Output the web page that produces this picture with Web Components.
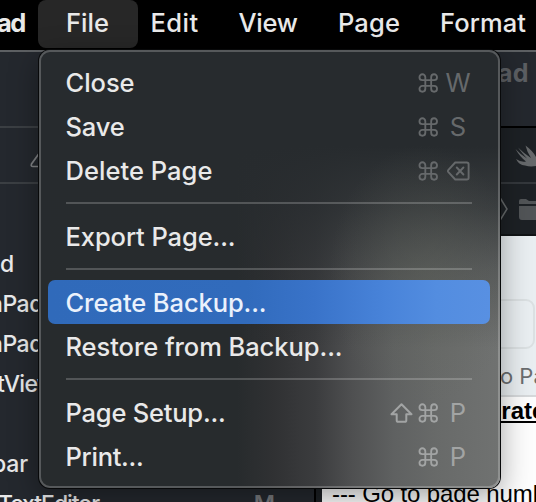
<!DOCTYPE html>
<html lang="en"><head><meta charset="utf-8"><title>File menu</title>
<style>
html,body{margin:0;width:536px;height:502px;overflow:hidden;background:#24282d}
body{font-family:Inter,"Liberation Sans",sans-serif;font-optical-sizing:none;font-variation-settings:"opsz" 14;font-weight:450;color:#e9e9e9}
</style></head><body>
<desk-top></desk-top>
<script>
// Text run whose tracking is adjusted to occupy exactly `w` pixels.
customElements.define('fit-text', class extends HTMLElement{
  constructor(){super();this.attachShadow({mode:'open'}).innerHTML=`<style>:host{display:inline-block;white-space:nowrap;flex:none}span{display:inline-block}</style><span><slot></slot></span>`}
  connectedCallback(){
    const s=this.shadowRoot.querySelector('span'),w=+this.getAttribute('w');
    if(!w)return;
    const n=this.textContent.length;
    s.style.letterSpacing=((w-s.getBoundingClientRect().width)/n)+'px';
  }
});
const glyphs={
 cmd:'<svg width="20" height="20" viewBox="-0.5 0 20.5 20"><path d="M7 7V4a3 3 0 1 0-3 3h12a3 3 0 1 0-3-3v12a3 3 0 1 0 3-3H4a3 3 0 1 0 3 3V7" fill="none" stroke="currentColor" stroke-width="1.9"/></svg>',
 shift:'<svg width="23" height="20" viewBox="0 0 23 20"><path d="M11.5 1.2L1.5 11.2H6.7V17.2Q6.7 18.8 8.3 18.8H14.7Q16.3 18.8 16.3 17.2V11.2H21.5Z" fill="none" stroke="currentColor" stroke-width="2" stroke-linejoin="round"/></svg>',
 del:'<svg width="23" height="20" viewBox="0 0 23 20"><path d="M8.2 1.5H19.8Q21.6 1.5 21.6 3.3V16.7Q21.6 18.5 19.8 18.5H8.2L1.2 10.8Q.6 10 1.2 9.2ZM9.8 6.5l6.6 7M16.4 6.5l-6.6 7" fill="none" stroke="currentColor" stroke-width="1.9" stroke-linejoin="round" stroke-linecap="round"/></svg>'
};
customElements.define('key-glyph', class extends HTMLElement{
  constructor(){super();this.attachShadow({mode:'open'})}
  connectedCallback(){this.shadowRoot.innerHTML=`<style>:host{display:flex;flex:none}svg{display:block}</style>${glyphs[this.getAttribute('name')]}`}
});
customElements.define('menu-item', class extends HTMLElement{
  constructor(){super();this.attachShadow({mode:'open'}).innerHTML=`<style>
  :host{display:flex;align-items:center;height:44px;margin:0 9px;padding:2px 17px 0 17.5px;box-sizing:border-box;font-size:25.5px;line-height:42px}
  :host([active]){background:linear-gradient(90deg,#306aba 0%,#316bbc 45%,#3973c9 60%,#4883d9 76%,#538de0 88%,#5890e2 100%);border-radius:7px;color:#eaf1fc}
  .k{margin-left:auto;display:flex;align-items:center;height:42px;color:var(--key,#66696b)}
  ::slotted(key-glyph){margin:0 5px 0 0}
  ::slotted(b){font-weight:400;width:30px;text-align:center;display:flex;justify-content:center}
  </style><slot></slot><div class="k"><slot name="key"></slot></div>`}
});
customElements.define('menu-line', class extends HTMLElement{
  constructor(){super();this.attachShadow({mode:'open'}).innerHTML=`<style>:host{display:block;height:2px;margin:10px 27px;background:rgba(255,255,255,.2)}</style>`}
});
customElements.define('drop-menu', class extends HTMLElement{
  constructor(){super();this.attachShadow({mode:'open'}).innerHTML=`<style>
  :host{display:block;box-sizing:border-box;width:461px;height:438px;padding:10px 1px 0 0;border-radius:11px;
  background:radial-gradient(ellipse 95px 130px at 385px 225px,rgba(98,101,92,.38),transparent),
   linear-gradient(180deg,#272b2e 0,#272b2e 22%,rgba(39,43,46,.75) 36%,rgba(39,43,46,.35) 50%,transparent 68%),
   linear-gradient(90deg,#272b2d 0,#272b2d 43%,#303133 51%,#3b3c3e 60%,#4f5051 68%,#5f6161 77%,#686a69 86%,#707271 100%);
  box-shadow:inset 0 0 0 2px rgba(255,255,255,.22),0 0 0 1px #08090a,0 8px 30px rgba(0,0,0,.38)}</style><slot></slot>`}
});
customElements.define('menu-bar', class extends HTMLElement{
  constructor(){super();this.attachShadow({mode:'open'}).innerHTML=`<style>
  :host{display:grid;grid-template-columns:38px 100px 88px 100px 102px 108px;height:50px;background:#000;font-size:25.5px;line-height:46px}
  div{height:48px;box-sizing:border-box}.app{font-weight:700;display:flex;justify-content:flex-end;padding-right:13px}
  .on{background:#272727;border-radius:8px;padding-left:28px}.i{padding-left:12px}
  </style><div class="app"><fit-text w="87">RunPad</fit-text></div><div class="on"><fit-text w="43">File</fit-text></div>
  <div class="i" style="padding-left:12.5px"><fit-text w="48">Edit</fit-text></div><div class="i" style="padding-left:12.5px"><fit-text w="59">View</fit-text></div><div class="i"><fit-text w="62">Page</fit-text></div><div class="i"><fit-text w="86">Format</fit-text></div>`}
});
customElements.define('side-pane', class extends HTMLElement{
  constructor(){super();this.attachShadow({mode:'open'}).innerHTML=`<style>
  :host{display:block;overflow:hidden;background:#24282e;border-right:2px solid #000;color:#e8e9ea;font-size:23px;font-weight:500}
  .a{height:76px;border-bottom:2px solid #3b3f43}.b{height:36px;border-bottom:2px solid #3b3f43;padding:18px 0 0 30px}
  .r{height:40px;line-height:40px;display:flex;white-space:nowrap}.list{padding-top:60px}
  .m{margin-left:auto;padding-right:39px;color:#77797c;font-weight:600}
  </style><div class="a"></div><div class="b"><svg width="28" height="22" viewBox="0 0 28 22" style="display:block"><path d="M13 2L1.5 18Q.5 20.5 3 20.5H25Q27 20.5 26 18Z" fill="none" stroke="#808285" stroke-width="1.7"/></svg></div>
  <div class="list"><div class="r"><fit-text w="15">d</fit-text></div>
  <div class="r"><fit-text w="54" style="margin-left:-11px">nPad</fit-text></div><div class="r"><fit-text w="54" style="margin-left:-11px">nPad</fit-text></div>
  <div class="r"><fit-text w="58" style="margin-left:-3px">tView</fit-text></div><div class="r"></div>
  <div class="r"><fit-text w="36" style="margin-left:-8px">bar</fit-text></div>
  <div class="r"><fit-text w="101" style="margin-left:-2px">TextEditor</fit-text><span class="m">M</span></div></div>`}
});
customElements.define('editor-pane', class extends HTMLElement{
  constructor(){super();this.attachShadow({mode:'open'}).innerHTML=`<style>
  :host{display:flex;flex-direction:column;overflow:hidden;background:#1c2024;min-width:0}
  .t{height:76px;background:#24282e;border-bottom:2px solid #000;flex:none;color:#5c5f63;font-weight:700;font-size:25px;line-height:46px;display:flex;justify-content:flex-end}
  .t fit-text{margin-right:7px}
  .tabs,.jump{height:54px;flex:none;display:flex;justify-content:flex-end;align-items:center;box-sizing:content-box}
  .tabs{border-bottom:2px solid #34383c;background:#1d2125}.jump{height:50px;border-bottom:2px solid #111416;background:#1d2125}
  .page{margin-left:6px;background:#fdfdfd;flex:1;color:#000;display:flex;flex-direction:column;font-family:"Liberation Sans",sans-serif;min-height:0}
  .tool{background:#e9eef1;border-bottom:2px solid #d5d8da;box-sizing:border-box;height:161px;flex:none;padding-top:63px;display:flex;flex-direction:column;align-items:flex-end}
  .box{width:80px;height:50px;box-sizing:border-box;border:2px solid #dbe0e2;border-radius:9px;margin-right:1px}
  .cap{font-family:Inter,sans-serif;font-weight:400;font-size:22px;line-height:28px;color:#6b6d6f;margin:13px -36px 0 0;white-space:nowrap}
  .h{font-weight:700;font-size:24px;line-height:28px;display:flex;justify-content:flex-end;margin-right:-24px;text-decoration:underline;text-decoration-thickness:2px;text-underline-offset:2px}
  .l{font-size:24px;line-height:28px;white-space:nowrap;padding-left:10px;margin-top:55px;font-weight:400}
  </style><div class="t"><fit-text w="31">ad</fit-text></div>
  <div class="tabs"><svg width="24" height="24" viewBox="0 0 24 24"><path d="M3.5 6Q9 12 15 15.5Q10 10 6 4.5Q12 10.5 19 15Q15 9 13.5 2.5Q21 8 24 14V23Q18 24 13 22.5Q7 22 4 16Q9 19.5 14 18.5Q8 14 3.5 6Z" fill="#66696b"/></svg></div>
  <div class="jump"><svg width="38" height="30" viewBox="0 0 38 30"><path d="M1 2l8 13-8 13" fill="none" stroke="#66696b" stroke-width="1.5"/><path d="M21 10V7q0-2 2-2h5l3 2h8v3zM21 12h18v14H24q-3 0-3-3z" fill="#515457"/></svg></div>
  <div class="page"><div class="tool"><div class="box"></div><div class="cap"><fit-text w="72">o Page</fit-text></div></div>
  <div class="h">Generated</div><div class="l"><fit-text w="235">--- Go to page number</fit-text></div></div>`}
});
customElements.define('desk-top', class extends HTMLElement{
  constructor(){super();this.attachShadow({mode:'open'}).innerHTML=`<style>
  :host{display:grid;grid-template-rows:50px 452px;width:536px;height:502px;overflow:hidden;position:relative}
  .win{display:grid;grid-template-columns:316px 220px;grid-template-rows:452px;position:relative}
  .win::after{content:"";position:absolute;left:0;right:0;top:0;height:2px;background:#5d6063}
  drop-menu{position:absolute;left:39px;top:50px}
  .low{--key:#a2a4a4}
  </style><menu-bar></menu-bar><div class="win"><side-pane></side-pane><editor-pane></editor-pane></div>
  <drop-menu>
   <menu-item><fit-text w="69">Close</fit-text><key-glyph slot="key" name="cmd"></key-glyph><b slot="key">W</b></menu-item>
   <menu-item><fit-text w="59">Save</fit-text><key-glyph slot="key" name="cmd"></key-glyph><b slot="key">S</b></menu-item>
   <menu-item><fit-text w="147">Delete Page</fit-text><key-glyph slot="key" name="cmd"></key-glyph><b slot="key"><key-glyph name="del"></key-glyph></b></menu-item>
   <menu-line></menu-line>
   <menu-item><fit-text w="170">Export Page...</fit-text></menu-item>
   <menu-line></menu-line>
   <menu-item active><fit-text w="201">Create Backup...</fit-text></menu-item>
   <menu-item><fit-text w="277">Restore from Backup...</fit-text></menu-item>
   <menu-line></menu-line>
   <menu-item class="low"><fit-text w="160">Page Setup...</fit-text><key-glyph slot="key" name="shift"></key-glyph><key-glyph slot="key" name="cmd"></key-glyph><b slot="key">P</b></menu-item>
   <menu-item class="low"><fit-text w="78">Print...</fit-text><key-glyph slot="key" name="cmd"></key-glyph><b slot="key">P</b></menu-item>
  </drop-menu>`}
});
</script></body></html>
